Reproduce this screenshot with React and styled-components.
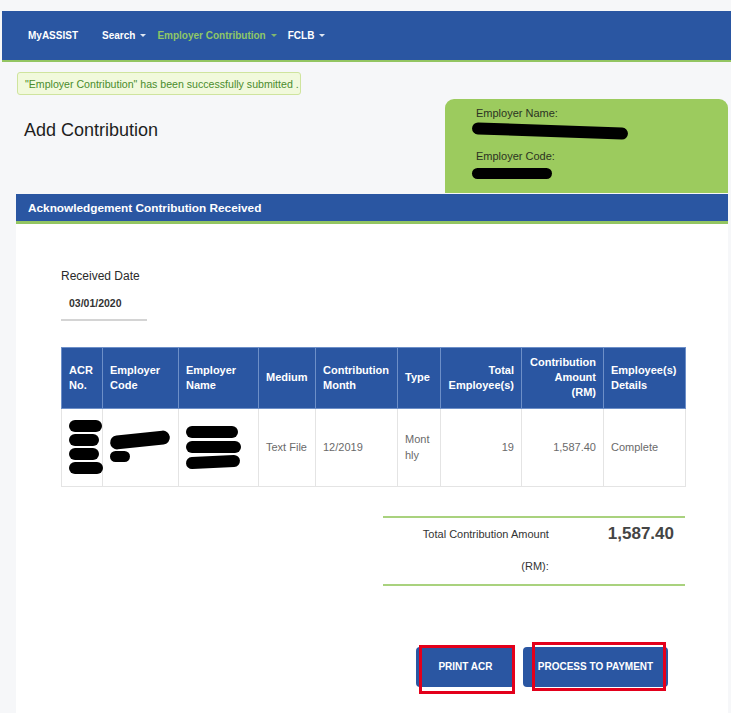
import React from 'react';
import styled, { createGlobalStyle } from 'styled-components';

const GlobalStyle = createGlobalStyle`
  body {
    margin: 0;
    background: #f6f7f9;
    font-family: "Liberation Sans", Arial, sans-serif;
  }
`;

const BLUE = '#2a56a2';
const GREEN = '#93c562';

const columns = [
  { label: ['ACR', 'No.'], width: 41 },
  { label: ['Employer', 'Code'], width: 76 },
  { label: ['Employer', 'Name'], width: 80 },
  { label: ['Medium'], width: 57 },
  { label: ['Contribution', 'Month'], width: 82 },
  { label: ['Type'], width: 43 },
  { label: ['Total', 'Employee(s)'], width: 81, right: true },
  { label: ['Contribution', 'Amount', '(RM)'], width: 82, right: true },
  { label: ['Employee(s)', 'Details'], width: 82 },
];

const App = () => {
  return (
    <>
      <GlobalStyle />
      <Page>
        <NavBar>
          <Brand>MyASSIST</Brand>
          <NavItem>Search<Caret /></NavItem>
          <NavItem $active>Employer Contribution<Caret /></NavItem>
          <NavItem>FCLB<Caret /></NavItem>
        </NavBar>

        <Main>
          <Alert>"Employer Contribution" has been successfully submitted .</Alert>

          <HeadRow>
            <Title>Add Contribution</Title>
            <EmployerBox>
              <BoxLabel>Employer Name:</BoxLabel>
              <BoxValue>
                <Redact $w={156} $h={12} $rot={2} />
              </BoxValue>
              <BoxLabel>Employer Code:</BoxLabel>
              <BoxValue>
                <Redact $w={80} $h={11} />
              </BoxValue>
            </EmployerBox>
          </HeadRow>

          <SectionBar>Acknowledgement Contribution Received</SectionBar>

          <Panel>
            <FieldLabel>Received Date</FieldLabel>
            <DateValue>03/01/2020</DateValue>
            <Underline />

            <Table>
              <colgroup>
                {columns.map((c, i) => (
                  <col key={i} style={{ width: c.width }} />
                ))}
              </colgroup>
              <thead>
                <tr>
                  {columns.map((c, i) => (
                    <Th key={i} $right={c.right}>
                      {c.label.map((l, j) => (
                        <div key={j}>{l}</div>
                      ))}
                    </Th>
                  ))}
                </tr>
              </thead>
              <tbody>
                <tr>
                  <Td>
                    <RedactStack>
                      <Redact $w={33} $h={12} />
                      <Redact $w={30} $h={12} />
                      <Redact $w={30} $h={12} />
                      <Redact $w={34} $h={12} />
                    </RedactStack>
                  </Td>
                  <Td>
                    <RedactStack $gap={4}>
                      <Redact $w={60} $h={14} $rot={-6} />
                      <Redact $w={20} $h={11} />
                    </RedactStack>
                  </Td>
                  <Td>
                    <RedactStack $gap={3}>
                      <Redact $w={52} $h={12} />
                      <Redact $w={55} $h={12} />
                      <Redact $w={54} $h={12} $rot={-3} />
                    </RedactStack>
                  </Td>
                  <Td $nowrap>Text File</Td>
                  <Td>12/2019</Td>
                  <Td $break>Monthly</Td>
                  <Td $right>19</Td>
                  <Td $right>1,587.40</Td>
                  <Td>Complete</Td>
                </tr>
              </tbody>
            </Table>

            <TotalRow>
              <TotalBox>
                <TotalLabel>Total Contribution Amount (RM):</TotalLabel>
                <TotalAmount>1,587.40</TotalAmount>
              </TotalBox>
            </TotalRow>

            <Actions>
              <Button $w={99}>
                PRINT ACR
                <Marker $l={3} $t={-2} $w={96} $h={49} />
              </Button>
              <Button $w={145}>
                PROCESS TO PAYMENT
                <Marker $l={9} $t={-5} $w={134} $h={49} />
              </Button>
            </Actions>
          </Panel>
        </Main>
      </Page>
    </>
  );
};

export default App;

const Page = styled.div`
  padding-top: 11px;
  height: 100vh;
  box-sizing: border-box;
  display: flex;
  flex-direction: column;
  overflow: hidden;
`;

const NavBar = styled.nav`
  flex-shrink: 0;
  margin-left: 2px;
  height: 49px;
  background: ${BLUE};
  border-bottom: 2px solid ${GREEN};
  display: flex;
  align-items: center;
  padding-left: 26px;
`;

const Brand = styled.span`
  color: #fff;
  font-size: 10px;
  font-weight: bold;
  margin-right: 24px;
`;

const NavItem = styled.span`
  color: ${(p) => (p.$active ? '#8fc766' : '#fff')};
  font-size: 10px;
  font-weight: bold;
  display: flex;
  align-items: center;
  margin-right: 11px;
`;

const Caret = styled.span`
  display: inline-block;
  margin-left: 5px;
  width: 0;
  height: 0;
  border-left: 3px solid transparent;
  border-right: 3px solid transparent;
  border-top: 3px solid currentColor;
  opacity: 0.85;
`;

const Main = styled.div`
  flex: 1;
  display: flex;
  flex-direction: column;
  padding: 0 3px 0 16px;
`;

const Alert = styled.div`
  margin: 10px 0 0 1px;
  width: 284px;
  height: 23px;
  box-sizing: border-box;
  background: #f1f9dc;
  border: 1px solid #cfe49e;
  border-radius: 3px;
  color: #4a8c2c;
  font-size: 10.6px;
  white-space: nowrap;
  display: flex;
  align-items: center;
  padding-left: 7px;
`;

const HeadRow = styled.div`
  margin-top: 4px;
  display: flex;
  justify-content: space-between;
`;

const Title = styled.h1`
  margin: 21px 0 0 8px;
  font-size: 18px;
  font-weight: normal;
  color: #1e1e1e;
`;

const EmployerBox = styled.div`
  width: 283px;
  height: 94px;
  box-sizing: border-box;
  background: #9ccb5e;
  border-radius: 9px 9px 0 0;
  padding: 8px 0 0 31px;
`;

const BoxLabel = styled.div`
  font-size: 11px;
  color: #2b3322;
  line-height: 13px;
`;

const BoxValue = styled.div`
  height: 15px;
  margin: 3px 0 12px -4px;
  display: flex;
  align-items: center;
`;

const Redact = styled.span`
  display: block;
  width: ${(p) => p.$w}px;
  height: ${(p) => p.$h}px;
  background: #000;
  border-radius: 8px;
  transform: rotate(${(p) => p.$rot || 0}deg);
`;

const RedactStack = styled.div`
  display: flex;
  flex-direction: column;
  gap: ${(p) => p.$gap ?? 2}px;
  align-items: flex-start;
`;

const SectionBar = styled.div`
  margin-top: 1px;
  height: 27px;
  background: ${BLUE};
  border-bottom: 3px solid ${GREEN};
  color: #fff;
  font-size: 11.8px;
  font-weight: bold;
  display: flex;
  align-items: center;
  padding-left: 12px;
`;

const Panel = styled.div`
  flex: 1;
  background: #fff;
  padding: 45px 43px 0 45px;
`;

const FieldLabel = styled.div`
  font-size: 12px;
  color: #2a2a2a;
  line-height: 14px;
`;

const DateValue = styled.div`
  margin-top: 13px;
  padding-left: 8px;
  font-size: 10.5px;
  font-weight: bold;
  color: #333;
  line-height: 14px;
`;

const Underline = styled.div`
  margin-top: 9px;
  width: 86px;
  height: 1.5px;
  background: #d4d4d4;
`;

const Table = styled.table`
  margin-top: 26px;
  width: 624px;
  border-collapse: collapse;
  table-layout: fixed;
`;

const Th = styled.th`
  background: ${BLUE};
  color: #fff;
  font-size: 11px;
  font-weight: bold;
  line-height: 15px;
  height: 61px;
  box-sizing: border-box;
  padding: 0 7px;
  border: 1px solid #6d8fc8;
  text-align: ${(p) => (p.$right ? 'right' : 'left')};
  vertical-align: middle;
`;

const Td = styled.td`
  height: 78px;
  box-sizing: border-box;
  padding: 0 7px;
  border: 1px solid #e4e4e4;
  font-size: 11px;
  line-height: 16px;
  color: #6a6a6a;
  text-align: ${(p) => (p.$right ? 'right' : 'left')};
  word-break: ${(p) => (p.$break ? 'break-all' : 'normal')};
  white-space: ${(p) => (p.$nowrap ? 'nowrap' : 'normal')};
  vertical-align: middle;
`;

const TotalRow = styled.div`
  margin-top: 29px;
  display: flex;
  justify-content: flex-end;
`;

const TotalBox = styled.div`
  width: 302px;
  height: 70px;
  box-sizing: border-box;
  border-top: 2px solid #a9d27e;
  border-bottom: 2px solid #a9d27e;
  display: flex;
  align-items: flex-start;
  justify-content: flex-end;
  padding-right: 11px;
`;

const TotalLabel = styled.div`
  width: 140px;
  margin-right: 59px;
  text-align: right;
  font-size: 11px;
  color: #333;
  line-height: 32px;
`;

const TotalAmount = styled.div`
  font-size: 17px;
  font-weight: bold;
  color: #444;
  line-height: 32px;
`;

const Actions = styled.div`
  margin-top: 61px;
  padding-left: 355px;
  display: flex;
  gap: 8px;
`;

const Button = styled.button`
  position: relative;
  width: ${(p) => p.$w}px;
  height: 40px;
  background: ${BLUE};
  border: none;
  border-radius: 4px;
  color: #fff;
  font-family: "Liberation Sans", Arial, sans-serif;
  font-size: 10px;
  font-weight: bold;
  cursor: pointer;
`;

const Marker = styled.span`
  position: absolute;
  left: ${(p) => p.$l}px;
  top: ${(p) => p.$t}px;
  width: ${(p) => p.$w}px;
  height: ${(p) => p.$h}px;
  box-sizing: border-box;
  border: 3px solid #e3001b;
  pointer-events: none;
`;
